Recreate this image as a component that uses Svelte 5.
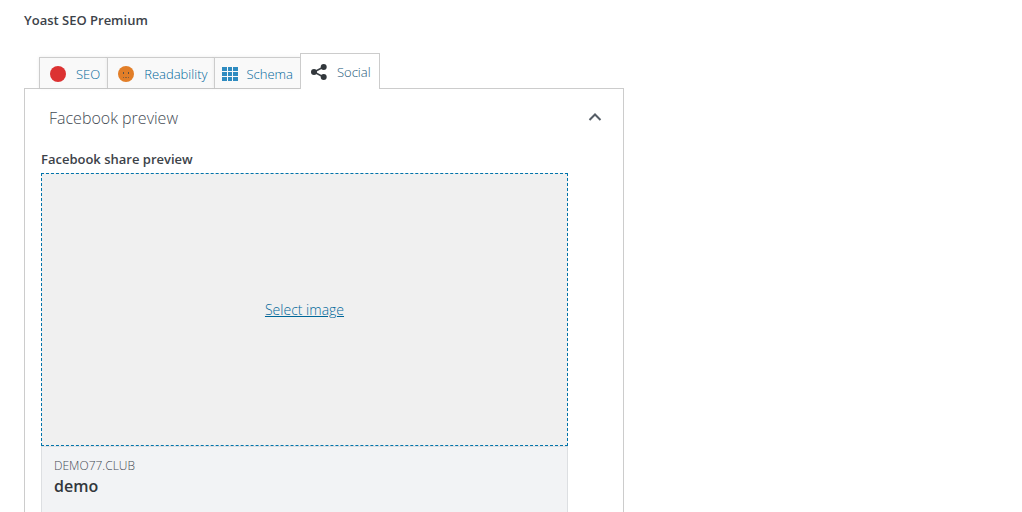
<script lang="ts">
  type Tab = { id: string; label: string }

  const tabs: Tab[] = [
    { id: 'seo', label: 'SEO' },
    { id: 'readability', label: 'Readability' },
    { id: 'schema', label: 'Schema' },
    { id: 'social', label: 'Social' },
  ]

  let active = $state('social')
  let expanded = $state(true)
</script>

<main>
  <h2>Yoast SEO Premium</h2>

  <div class="metabox">
    <div class="tabs" role="tablist" aria-label="Yoast SEO">
      {#each tabs as tab (tab.id)}
        <button
          class="tab {tab.id}"
          class:active={active === tab.id}
          role="tab"
          aria-selected={active === tab.id}
          onclick={() => (active = tab.id)}
        >
          <svg width="16" height="16" viewBox="0 0 16 16" aria-hidden="true">
            {#if tab.id === 'seo'}
              <circle cx="8" cy="8" r="8" fill="#dc3232" />
            {:else if tab.id === 'readability'}
              <circle cx="8" cy="8" r="8" fill="#e27e28" />
              <g fill="#5b5146">
                <rect x="5" y="6" width="1" height="2" />
                <rect x="10" y="6" width="1" height="2" />
                <rect x="5" y="11" width="1" height="1" opacity="0.7" />
                <rect x="7" y="11" width="2" height="1" opacity="0.6" />
                <rect x="10" y="11" width="1" height="1" opacity="0.7" />
              </g>
            {:else if tab.id === 'schema'}
              <path
                fill="#2e8bc0"
                d="M0 1h5v4H0zM6 1h4v4H6zM11 1h5v4h-5zM0 6h5v4H0zM6 6h4v4H6zM11 6h5v4h-5zM0 11h5v4H0zM6 11h4v4H6zM11 11h5v4h-5z"
              />
            {:else}
              <path d="M12.500 3L3 8l9.500 5" fill="none" stroke="#3c4146" stroke-width="1.600" />
              <g fill="#32373c">
                <circle cx="12.700" cy="3" r="3" />
                <circle cx="3" cy="8" r="3" />
                <circle cx="12.700" cy="13" r="3" />
              </g>
            {/if}
          </svg>
          <span>{tab.label}</span>
        </button>
      {/each}
    </div>

    <section class="panel">
      <button class="toggle" aria-expanded={expanded} onclick={() => (expanded = !expanded)}>
        <span>Facebook preview</span>
        <svg class:closed={!expanded} width="14" height="12" viewBox="0 0 14 12" aria-hidden="true">
          <path d="M1.500 8L7 2.500 12.500 8" fill="none" stroke="#555d66" stroke-width="2" />
        </svg>
      </button>

      {#if expanded}
        <div class="content">
          <h3>Facebook share preview</h3>
          <div class="preview">
            <div class="image">
              <button class="select">Select image</button>
            </div>
            <div class="summary">
              <p class="site">DEMO77.CLUB</p>
              <p class="title">demo</p>
            </div>
          </div>
        </div>
      {/if}
    </section>
  </div>
</main>

<style>
  :global(body) {
    background: #fff;
  }

  main {
    box-sizing: border-box;
    color: #32373c;
    font-family: 'Segoe UI', 'Open Sans', 'Noto Sans', sans-serif;
    font-size: 13px;
    height: 100vh;
    line-height: 20px;
    overflow: hidden;
    padding: 10px 24px 0;
  }

  h2,
  h3,
  p {
    margin: 0;
  }

  h2,
  h3 {
    color: #3c4249;
    font-size: 13px;
    font-weight: 600;
    line-height: 20px;
  }

  button {
    background: none;
    border: none;
    color: inherit;
    cursor: pointer;
    font: inherit;
    padding: 0;
  }

  .metabox {
    margin-top: 23px;
    max-width: 600px;
  }

  .tabs {
    align-items: flex-end;
    display: flex;
    padding-left: 15px;
  }

  .tab {
    align-items: center;
    background: #f9f9f9;
    border: 1px solid #ccc;
    border-bottom: none;
    box-shadow: 0 0 3px rgba(0, 0, 0, 0.08);
    box-sizing: border-box;
    color: #006799;
    display: flex;
    font-weight: 350;
    gap: 10px;
    height: 31px;
    margin-right: -1px;
    padding: 2px 7px 0 10px;
  }

  .schema {
    gap: 8px;
    padding: 2px 7px 0;
  }

  .active {
    background: #fff;
    box-shadow: none;
    height: 36px;
    margin-bottom: -1px;
    padding: 0 8px 0 10px;
    position: relative;
  }

  .active span {
    color: #1d5878;
  }

  .panel {
    border: 1px solid #ccc;
    box-sizing: border-box;
    min-height: 480px;
    padding: 0 16px;
  }

  .toggle {
    align-items: center;
    color: #444b54;
    display: flex;
    font-size: 16px;
    font-weight: 300;
    height: 60px;
    justify-content: space-between;
    padding: 0 5px 2px 8px;
    width: 100%;
  }

  .closed {
    transform: rotate(180deg);
  }

  .preview {
    margin-top: 4px;
    max-width: 527px;
  }

  .image {
    align-items: center;
    background: #f0f0f0;
    border: 1px dashed #0073aa;
    box-sizing: border-box;
    display: flex;
    height: 273px;
    justify-content: center;
  }

  .select {
    color: #006799;
    font-size: 14px;
    font-weight: 350;
    text-decoration: underline;
  }

  .summary {
    background: #f2f3f5;
    border: 1px solid #dddfe2;
    min-height: 60px;
    padding: 10px 12px;
  }

  .site {
    color: #454b54;
    font-size: 12px;
    font-weight: 300;
    line-height: 18px;
  }

  .title {
    font-size: 16px;
    font-weight: 600;
    line-height: 22px;
  }
</style>
